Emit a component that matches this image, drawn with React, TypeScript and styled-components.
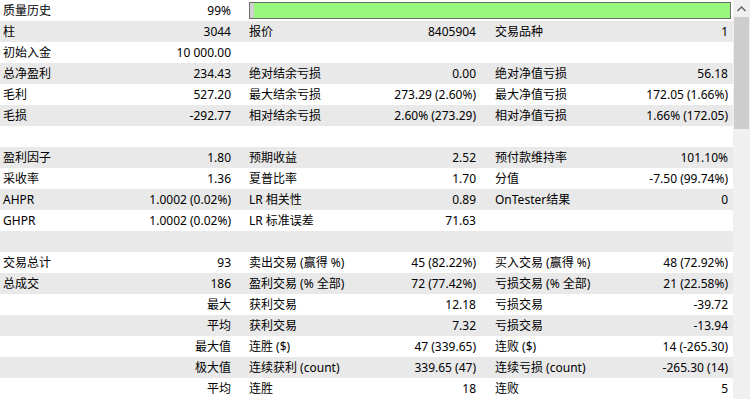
import styled, { createGlobalStyle } from "styled-components";

const GlobalStyle = createGlobalStyle`
  html, body {
    margin: 0;
    padding: 0;
    background: #ffffff;
  }
  body {
    font-family: "Noto Sans", "Noto Sans CJK SC", sans-serif;
    font-size: 12px;
    color: #000;
  }
`;

const Frame = styled.div`
  width: 750px;
  height: 399px;
  display: flex;
  overflow: hidden;
  background: #fff;
`;

const Table = styled.div`
  width: 733px;
  display: flex;
  flex-direction: column;
`;

const Row = styled.div<{ $stripe: boolean }>`
  height: 21px;
  display: grid;
  grid-template-columns: 246px 246px 241px;
  align-items: center;
  background: ${(p) => (p.$stripe ? "#e9e9e9" : "#ffffff")};
`;

const Cell = styled.div<{ $pr: number }>`
  display: flex;
  justify-content: space-between;
  align-items: center;
  padding: 0 ${(p) => p.$pr}px 0 3px;
  white-space: nowrap;
  line-height: 21px;
`;

const Label = styled.span``;
const Value = styled.span``;

const BarCell = styled.div`
  grid-column: 2 / 4;
  padding: 0 2px 0 3px;
  display: flex;
  align-items: center;
`;

const Bar = styled.div`
  flex: 1;
  height: 15px;
  border: 1px solid #6d6d6d;
  background: #98f87e;
  display: flex;
`;

const BarStart = styled.div`
  width: 4px;
  background: #d0d0d0;
`;

const Scrollbar = styled.div`
  width: 17px;
  background: #f0f0f0;
  display: flex;
  flex-direction: column;
  align-items: center;
`;

const ArrowButton = styled.div`
  height: 17px;
  width: 17px;
  display: flex;
  align-items: center;
  justify-content: center;
`;

const Thumb = styled.div`
  width: 15px;
  height: 112px;
  background: #cdcdcd;
`;

type C = [string, string] | null;

const pad = [15, 16, 5];

const rows: C[][] = [
  [["质量历史", "99%"], null, null],
  [["柱", "3044"], ["报价", "8405904"], ["交易品种", "1"]],
  [["初始入金", "10 000.00"], null, null],
  [["总净盈利", "234.43"], ["绝对结余亏损", "0.00"], ["绝对净值亏损", "56.18"]],
  [["毛利", "527.20"], ["最大结余亏损", "273.29 (2.60%)"], ["最大净值亏损", "172.05 (1.66%)"]],
  [["毛损", "-292.77"], ["相对结余亏损", "2.60% (273.29)"], ["相对净值亏损", "1.66% (172.05)"]],
  [null, null, null],
  [["盈利因子", "1.80"], ["预期收益", "2.52"], ["预付款维持率", "101.10%"]],
  [["采收率", "1.36"], ["夏普比率", "1.70"], ["分值", "-7.50 (99.74%)"]],
  [["AHPR", "1.0002 (0.02%)"], ["LR 相关性", "0.89"], ["OnTester结果", "0"]],
  [["GHPR", "1.0002 (0.02%)"], ["LR 标准误差", "71.63"], null],
  [null, null, null],
  [["交易总计", "93"], ["卖出交易 (赢得 %)", "45 (82.22%)"], ["买入交易 (赢得 %)", "48 (72.92%)"]],
  [["总成交", "186"], ["盈利交易 (% 全部)", "72 (77.42%)"], ["亏损交易 (% 全部)", "21 (22.58%)"]],
  [["", "最大"], ["获利交易", "12.18"], ["亏损交易", "-39.72"]],
  [["", "平均"], ["获利交易", "7.32"], ["亏损交易", "-13.94"]],
  [["", "最大值"], ["连胜 ($)", "47 (339.65)"], ["连败 ($)", "14 (-265.30)"]],
  [["", "极大值"], ["连续获利 (count)", "339.65 (47)"], ["连续亏损 (count)", "-265.30 (14)"]],
  [["", "平均"], ["连胜", "18"], ["连败", "5"]],
];

export default function App() {
  return (
    <>
      <GlobalStyle />
      <Frame>
        <Table>
          {rows.map((cells, i) => (
            <Row key={i} $stripe={i % 2 === 1}>
              {i === 0 ? (
                <>
                  <Cell $pr={pad[0]}>
                    <Label>{cells[0]![0]}</Label>
                    <Value>{cells[0]![1]}</Value>
                  </Cell>
                  <BarCell>
                    <Bar>
                      <BarStart />
                    </Bar>
                  </BarCell>
                </>
              ) : (
                cells.map((c, j) => (
                  <Cell key={j} $pr={pad[j]}>
                    <Label>{c ? c[0] : ""}</Label>
                    <Value>{c ? c[1] : ""}</Value>
                  </Cell>
                ))
              )}
            </Row>
          ))}
        </Table>
        <Scrollbar>
          <ArrowButton>
            <svg width="9" height="6" viewBox="0 0 9 6">
              <path d="M0.5 5 L4.5 1 L8.5 5" fill="none" stroke="#606060" strokeWidth="1.4" />
            </svg>
          </ArrowButton>
          <Thumb />
        </Scrollbar>
      </Frame>
    </>
  );
}
